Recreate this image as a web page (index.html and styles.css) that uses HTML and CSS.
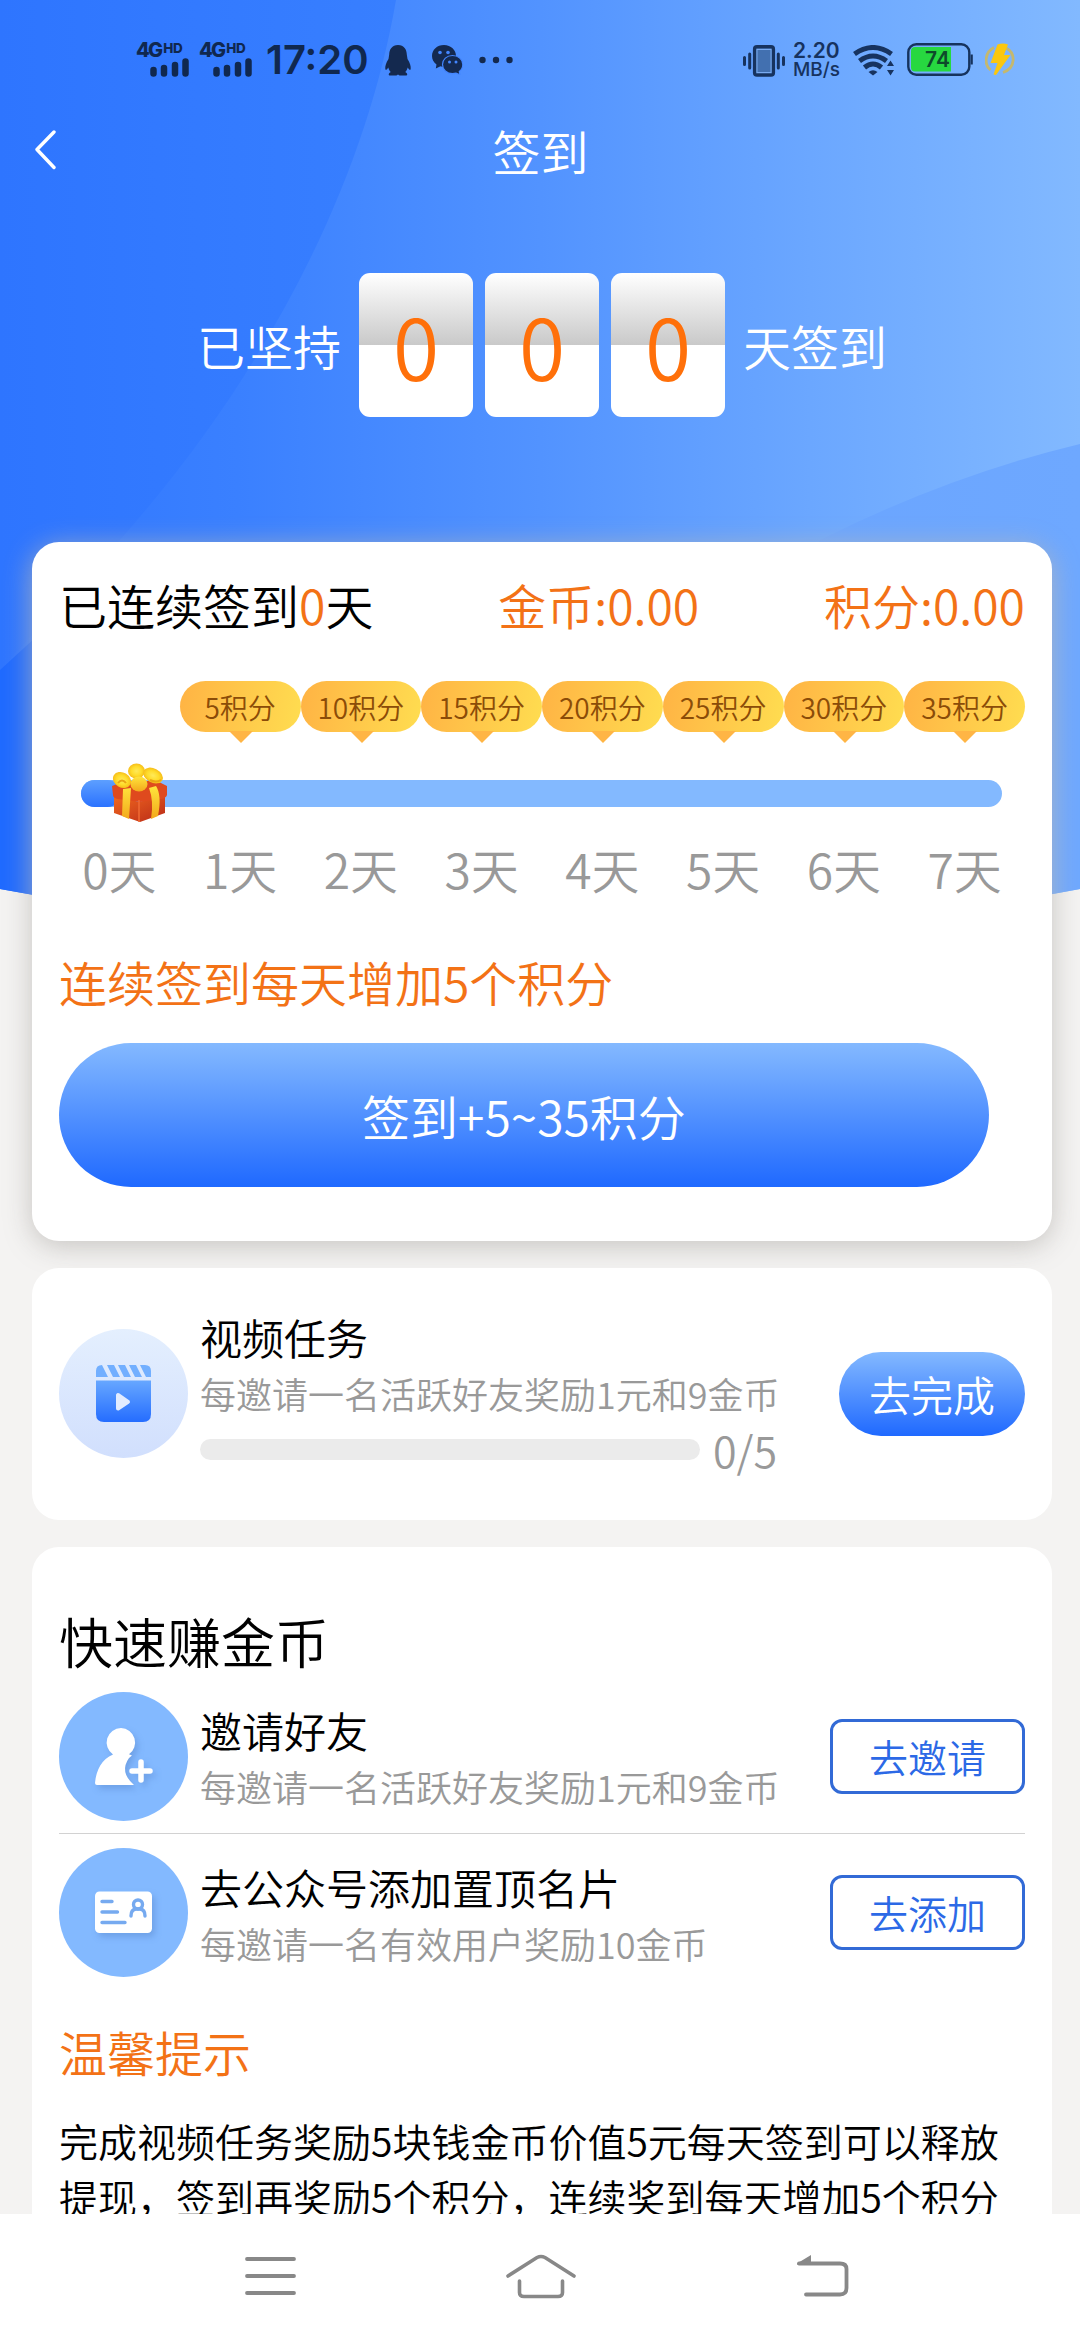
FILE: index.html
```html
<!DOCTYPE html>
<html lang="zh-CN">
<head>
<meta charset="utf-8">
<title>签到</title>
<link rel="stylesheet" href="styles.css">
</head>
<body>
<div class="phone">
  <svg class="hero" viewBox="0 0 1080 910" aria-hidden="true">
    <defs>
      <linearGradient id="sky" x1="0" x2="1"><stop offset="0" stop-color="#2f76ff"/><stop offset=".22" stop-color="#3a80ff"/><stop offset=".5" stop-color="#5293ff"/><stop offset=".75" stop-color="#6ba7ff"/><stop offset="1" stop-color="#82b9ff"/></linearGradient>
      <linearGradient id="left" x1="0" x2="1"><stop offset="0" stop-color="#2e75ff"/><stop offset="1" stop-color="#387fff"/></linearGradient>
      <linearGradient id="right" x1="0" x2="1"><stop offset="0" stop-color="#68a3ff"/><stop offset="1" stop-color="#6ea8ff"/></linearGradient>
      <clipPath id="arc"><path d="M0 0H1080V889Q810 940 540 940T0 889Z"/></clipPath>
    </defs>
    <g clip-path="url(#arc)">
      <rect width="1080" height="910" fill="url(#sky)"/>
      <path d="M0 0H396C365 180 270 370 120 540L0 670Z" fill="url(#left)"/>
      <path d="M1080 444Q950 475 820 540L600 910H1080Z" fill="url(#right)"/>
      <path d="M0 670L120 560V910H0Z" fill="#1f6aff"/>
    </g>
  </svg>

  <header class="status">
    <div class="sim"><span class="net">4G<sup>HD</sup></span><svg width="39" height="19" viewBox="0 0 39 19"><path d="M3.500 12v3.500M14 10v5.500M25 7v8.500M35.500 3.500v12" stroke="#10284f" stroke-width="6.500" stroke-linecap="round"/></svg></div>
    <div class="sim"><span class="net">4G<sup>HD</sup></span><svg width="39" height="19" viewBox="0 0 39 19"><path d="M3.500 12v3.500M14 10v5.500M25 7v8.500M35.500 3.500v12" stroke="#10284f" stroke-width="6.500" stroke-linecap="round"/></svg></div>
    <span class="clock">17:20</span>
    <svg class="qq" width="26" height="31" viewBox="0 0 26 31" fill="#14294f"><path d="M13 0C7 0 4.200 4.500 4.200 9.500L3.500 14C1 18 0 21 .3 24c.3 1.500 1.500 1 3-1.500.4 1.800 1.300 3.500 2.500 4.500C3.500 28 3 30.500 5 30.500H11.500L13 29.500l1.500 1H21c2-0 1.500-2.500-.8-3.500 1.200-1 2.100-2.700 2.500-4.500 1.500 2.500 2.700 3 3 1.500C26 21 25 18 22.500 14l-.7-4.500C21.800 4.500 19 0 13 0Z"/></svg>
    <svg class="wechat" width="31" height="30" viewBox="0 0 31 30"><path d="M12 0C5 0 0 4.800 0 11c0 3.500 1.700 6.500 4.500 8.500L3.800 23.500 8.500 21.200A13 13 0 0 0 12 21.800C19 21.800 24 17 24 11S19 0 12 0Z" fill="#14294f"/><circle cx="8" cy="7.500" r="1.800" fill="#4386ff"/><circle cx="16" cy="7.500" r="1.800" fill="#4386ff"/><path d="M20.500 10.500c-5.800 0-10 4-10 9s4.200 9.200 10 9.200c1.400 0 2.500-.2 3.600-.5L28 29.800l-.7-3.300c2.200-1.700 3.500-4.100 3.500-7 0-5-4.500-9-10.300-9Z" fill="#14294f" stroke="#4386ff" stroke-width="1.200"/><circle cx="17.500" cy="17" r="1.500" fill="#4386ff"/><circle cx="24" cy="17" r="1.500" fill="#4386ff"/></svg>
    <svg class="more" width="34" height="8" viewBox="0 0 34 8" fill="#14294f"><circle cx="3.500" cy="4" r="3.200"/><circle cx="17" cy="4" r="3.200"/><circle cx="30.500" cy="4" r="3.200"/></svg>

    <svg class="vibrate" width="42" height="32" viewBox="0 0 42 32"><rect x="11.500" y="1.700" width="19" height="28.500" rx="2.500" fill="#4270b0" stroke="#17335f" stroke-width="3.200"/><rect x="14" y="4.500" width="14" height="23" fill="none" stroke="#79aaf0" stroke-width="1"/><path d="M6.700 9v14M35.300 9v14M1.500 12.500v7M40.500 12.500v7" stroke="#17335f" stroke-width="3" stroke-linecap="round"/></svg>
    <div class="speed"><span>2.20</span><span>MB/s</span></div>
    <svg class="wifi" width="42" height="31" viewBox="0 0 42 31"><path d="M1.500 9Q20 -4 38.500 9M6.500 16Q20 6 33.500 16M11.500 22.500Q20 15.500 28.500 22.500" fill="none" stroke="#17335f" stroke-width="5"/><path d="M15.500 27Q20 23.500 24.500 27L20 30.500Z" fill="#17335f"/><path d="M34 21L37.500 15.500 41 21ZM34 25L37.500 30.500 41 25Z" fill="#17335f"/></svg>
    <svg class="battery" width="66" height="33" viewBox="0 0 66 33"><rect x="1.300" y="1.300" width="61" height="30.400" rx="8" fill="none" stroke="#16335d" stroke-width="2.400"/><path d="M8 4H44V28.500H8Q4 28.500 4 24.500V8Q4 4 8 4Z" fill="#27d840"/><path d="M64.700 11.500v10" stroke="#16335d" stroke-width="2.200"/><text x="30.500" y="24.300" text-anchor="middle" class="charge">74</text></svg>
    <svg class="bolt" width="30" height="33" viewBox="0 0 30 33"><g fill="none" stroke="#c4b86f" stroke-width="2.800"><path d="M9 4.500C0 9 -1.500 21 5.500 27"/><path d="M21 5C31 10 31 25 18 29.500"/></g><path d="M12.500 1.500Q18-.5 23 1.500L19 12H25.500L11 32 8.500 31.500 12.500 20H5.500Z" fill="#fbc70f"/></svg>
  </header>

  <nav class="titlebar">
    <svg width="22" height="40" viewBox="0 0 22 40"><path d="M19 2L2 19.500 19 37.500" fill="none" stroke="#fff" stroke-width="3.400" stroke-linecap="round" stroke-linejoin="round"/></svg>
    <h1>签到</h1>
  </nav>

  <section class="counter">
    <span class="label">已坚持</span>
    <div class="flips"><b>0</b><b>0</b><b>0</b></div>
    <span class="label">天签到</span>
  </section>

  <main>
    <section class="card checkin">
      <div class="totals"><span>已连续签到<em>0</em>天</span><em>金币:0.00</em><em>积分:0.00</em></div>
      <div class="badges"><i></i><span>5积分</span><span>10积分</span><span>15积分</span><span>20积分</span><span>25积分</span><span>30积分</span><span>35积分</span></div>
      <div class="track">
        <div class="fill"></div>
        <svg class="gift" width="58" height="60" viewBox="0 0 58 60">
          <defs>
            <linearGradient id="box" x1="0" y1="0" x2="1" y2="1"><stop offset="0" stop-color="#f2691f"/><stop offset="1" stop-color="#b92a18"/></linearGradient>
            <linearGradient id="gold" x1="0" y1="0" x2="0" y2="1"><stop offset="0" stop-color="#ffe43c"/><stop offset="1" stop-color="#f3a91c"/></linearGradient>
            <radialGradient id="bow"><stop offset="0" stop-color="#ffe95a"/><stop offset=".6" stop-color="#ffdc2a"/><stop offset="1" stop-color="#f6bd1a"/></radialGradient>
          </defs>
          <path d="M3 32L28 39 54 32V50L29 59 3 50Z" fill="url(#box)"/>
          <path d="M1 23L14 18H46L56 23V32Q55 35 50 36L29 39 7 36Q2 35 2 32Z" fill="#df4a1e"/>
          <path d="M28 37V59" stroke="#f06b35" stroke-width="1.500"/>
          <path d="M12 26L20 25 18 56 11 53ZM38 25L45 23Q51 32 47 53L40 56Q43 38 38 25Z" fill="url(#gold)"/>
          <ellipse cx="25.500" cy="8" rx="8.500" ry="7.500" fill="url(#bow)"/>
          <ellipse cx="11" cy="17" rx="9.500" ry="7.500" transform="rotate(30 11 17)" fill="url(#bow)"/>
          <ellipse cx="42" cy="12.500" rx="10.500" ry="7" transform="rotate(28 42 12.500)" fill="url(#bow)"/>
          <path d="M7 20Q11 15 15 20M39 17Q45 20 50 17" fill="none" stroke="#e9a414" stroke-width="2"/>
          <ellipse cx="28" cy="21" rx="8.500" ry="7.500" fill="url(#gold)"/>
        </svg>
      </div>
      <div class="days"><span>0天</span><span>1天</span><span>2天</span><span>3天</span><span>4天</span><span>5天</span><span>6天</span><span>7天</span></div>
      <p class="rule">连续签到每天增加5个积分</p>
      <button class="sign">签到+5~35积分</button>
    </section>

    <section class="card task">
      <svg class="icon" viewBox="0 0 129 129">
        <defs>
          <linearGradient id="pale" x1="0" y1="0" x2="0" y2="1"><stop offset="0" stop-color="#e4effe"/><stop offset="1" stop-color="#d1dffd"/></linearGradient>
          <linearGradient id="film" x1="0" y1="0" x2="0" y2="1"><stop offset="0" stop-color="#67a7ff"/><stop offset="1" stop-color="#256dff"/></linearGradient>
        </defs>
        <circle cx="64.500" cy="64.500" r="64.500" fill="url(#pale)"/>
        <path d="M37 51.500H92V85Q92 93 84 93H45Q37 93 37 85Z" fill="url(#film)"/>
        <path d="M37 48V42Q37 36 43 36L49 48ZM48 36H55L61 48H54ZM59 36H66L72 48H65ZM70 36H77L83 48H76ZM81 36H86Q92 36 92 42V48H87Z" fill="#72afff"/>
        <path d="M59 66V79.500L69 72.800Z" fill="#e2ecff" stroke="#e2ecff" stroke-width="4" stroke-linejoin="round"/>
      </svg>
      <div class="info">
        <h3>视频任务</h3>
        <p>每邀请一名活跃好友奖励1元和9金币</p>
        <div class="progress"><div class="bar"></div><span>0/5</span></div>
      </div>
      <button class="go">去完成</button>
    </section>

    <section class="card earn">
      <h2>快速赚金币</h2>
      <div class="row">
        <svg class="icon" viewBox="0 0 129 129">
          <circle cx="64.500" cy="64.500" r="64.500" fill="#83b9ff"/>
          <g class="glyph" fill="#fff"><path d="M62 36A14.500 14.500 0 0 0 54 62.500C43 67 37 78 36 91Q36 93 38 93H75Q60 80 70 66L73 63.500 70 62.300A14.500 14.500 0 0 0 62 36Z"/><path d="M82 70V88M73 79H91" stroke="#fff" stroke-width="5.500" stroke-linecap="round"/></g>
        </svg>
        <div class="info"><h3>邀请好友</h3><p>每邀请一名活跃好友奖励1元和9金币</p></div>
        <button class="outline">去邀请</button>
      </div>
      <div class="row">
        <svg class="icon" viewBox="0 0 129 129">
          <circle cx="64.500" cy="64.500" r="64.500" fill="#83b9ff"/>
          <rect class="glyph" x="36" y="43.500" width="57" height="41.500" rx="4.500" fill="#fff"/>
          <g fill="none" stroke="#76aaf0" stroke-width="3.400" stroke-linecap="round"><path d="M43 53.500H53M43 64H58.500M43 74.500H66"/><circle cx="79" cy="56.500" r="4.500"/><path d="M72 68Q72 61.500 77 61H81Q86 61.500 86 68"/></g>
        </svg>
        <div class="info"><h3>去公众号添加置顶名片</h3><p>每邀请一名有效用户奖励10金币</p></div>
        <button class="outline">去添加</button>
      </div>
      <h4>温馨提示</h4>
      <p class="tips">完成视频任务奖励5块钱金币价值5元每天签到可以释放<br>提现，签到再奖励5个积分，连续奖到每天增加5个积分</p>
    </section>
  </main>

  <footer>
    <svg width="52" height="44" viewBox="0 0 52 44"><path d="M3 5H50M3 22H50M3 39H50" stroke="#888" stroke-width="3.800" stroke-linecap="round"/></svg>
    <svg width="72" height="46" viewBox="0 0 72 46"><path d="M3 22L32 3.500Q36 1.500 40 3.500L69 22M14.500 27V38.500Q14.500 42.500 19 42.500H53Q57.500 42.500 57.500 38.500V27" fill="none" stroke="#888" stroke-width="3.600" stroke-linecap="round"/></svg>
    <svg width="54" height="46" viewBox="0 0 54 46"><path d="M1 9.500L15 1V10.500H1Z" fill="#888"/><path d="M3 9.500H44Q50.500 9.500 50.500 15V34Q50.500 40.500 44 40.500H10" fill="none" stroke="#888" stroke-width="3.800" stroke-linecap="round"/></svg>
  </footer>
</div>
</body>
</html>
```

FILE: styles.css
```css
* { box-sizing: border-box; margin: 0; padding: 0; }
body { width: 1080px; background: #f4f3f2; font-family: "Noto Sans CJK SC", sans-serif; font-weight: 350; color: #000; }
em, i { font-style: normal; }
h1, h2, h3, h4 { font-weight: 350; }
button { border: 0; font-family: inherit; font-weight: 350; color: #fff; }
svg { display: block; flex: none; }

.phone { position: relative; height: 2340px; overflow: hidden; display: flex; flex-direction: column; isolation: isolate; }
.hero { position: absolute; top: 0; left: 0; width: 1080px; height: 910px; z-index: -1; }

.status { height: 100px; padding: 42px 65px 0 136px; display: flex; align-items: flex-start; font-family: Inter, sans-serif; color: #10284f; }
.sim { width: 53px; margin-right: 10px; display: flex; flex-direction: column; align-items: flex-end; }
.net { width: 53px; height: 16px; font-size: 20px; line-height: 16px; font-weight: 800; letter-spacing: -1.8px; white-space: nowrap; display: flex; }
.net sup { font-size: 13.500px; line-height: 2px; padding-top: 5px; letter-spacing: -.3px; margin-left: 2px; vertical-align: baseline; }
.clock { margin-left: 4px; width: 101px; font-size: 40px; line-height: 36px; font-weight: 600; white-space: nowrap; }
.qq { margin: 3px 0 0 18px; }
.wechat { margin: 3px 0 0 21px; }
.more { margin: 14px 0 0 16px; }
.vibrate { margin: 3px 0 0 auto; }
.speed { width: 50px; margin-left: 8px; display: flex; flex-direction: column; font-weight: 600; white-space: nowrap; color: #17335f; }
.speed span { font-size: 21px; line-height: 18px; }
.speed span + span { font-size: 19px; line-height: 20px; font-weight: 500; }
.wifi { margin: 3px 0 0 10px; }
.battery { margin: 1px 0 0 12px; }
.charge { font: 600 21px Inter, sans-serif; fill: #0e4a2b; }
.bolt { margin: 1px 0 0 12px; }

.titlebar { height: 100px; padding: 0 34px 0 35px; display: grid; grid-template-columns: 60px 1fr 60px; align-items: center; color: #fff; }
.titlebar h1 { font-size: 48px; line-height: 72px; text-align: center; }

.counter { margin-top: 73px; height: 144px; padding-left: 4px; display: flex; justify-content: center; align-items: center; gap: 18px; color: #fff; }
.label { font-size: 48px; line-height: 72px; }
.flips { display: flex; gap: 12px; }
.flips b { width: 114px; height: 144px; border-radius: 11px; background: linear-gradient(#fff, #c9c9c9 50%, #fff 50%); color: #ff700a; font-size: 84px; line-height: 144px; font-weight: 350; text-align: center; }

main { height: 1672px; margin-top: 125px; padding: 0 28px 0 32px; flex: none; display: flex; flex-direction: column; gap: 27px; }
.card { background: #fff; border-radius: 27px; padding: 0 27px; flex: none; }
.checkin { height: 699px; box-shadow: 0 5px 28px rgba(186, 184, 180, .8); }
.totals { padding-top: 26px; display: flex; justify-content: space-between; font-size: 48px; line-height: 72px; }
.totals em, .rule, h4 { color: #f37216; }
.badges, .days { display: grid; grid-template-columns: repeat(8, 1fr); }
.badges { margin-top: 41px; }
.badges span { position: relative; height: 51px; border-radius: 26px; background: linear-gradient(100deg, #ffb344, #ffdd50); color: #8b4c08; font-size: 28px; line-height: 52px; text-align: center; }
.badges span::after { content: ""; position: absolute; top: 50px; left: 49px; border: 12px solid transparent; border-bottom: 0; border-top-color: #ffb545; }
.track { position: relative; margin: 48px 23px 0 22px; height: 27px; border-radius: 14px; background: #83b9ff; }
.fill { width: 40px; height: 27px; border-radius: 20px; background: linear-gradient(#5d9fff, #2b72ff); }
.gift { position: absolute; left: 30px; top: -17px; }
.days { margin-top: 25px; font-size: 48px; line-height: 72px; color: #999; text-align: center; }
.rule { margin-top: 41px; font-size: 48px; line-height: 72px; }
.sign { display: block; margin-top: 26px; width: 930px; height: 144px; border-radius: 72px; background: linear-gradient(#84b9ff, #1f69ff); font-size: 48px; line-height: 144px; }

.icon { width: 129px; height: 129px; }
.glyph { filter: drop-shadow(3px 4px 3px rgba(50, 90, 160, .25)); }
.info { margin-left: 12px; flex: 1; white-space: nowrap; }
.info h3 { font-size: 42px; line-height: 60px; }
.info p { font-size: 36px; line-height: 52px; color: #999; }
.task { height: 252px; display: flex; align-items: center; }
.task .icon { margin-bottom: 2px; }
.task .info { padding-bottom: 2px; }
.progress { display: flex; align-items: center; height: 60px; gap: 13px; }
.bar { width: 500px; height: 21px; border-radius: 11px; background: #ebebeb; }
.progress span { font-size: 43px; line-height: 60px; color: #999; }
.go { width: 186px; height: 84px; border-radius: 42px; background: linear-gradient(#84b9ff, #1f69ff); font-size: 42px; line-height: 84px; }

.earn { height: 900px; padding-top: 54px; }
.earn h2 { font-size: 54px; line-height: 80px; margin-bottom: -4px; }
.row { height: 156px; padding-top: 2px; display: flex; align-items: center; }
.row + .row { border-top: 1px solid #d2d2d2; }
.outline { width: 195px; height: 75px; border: 3px solid #326ad6; border-radius: 12px; background: #fff; color: #2c69e6; font-size: 39px; line-height: 67px; }
h4 { margin-top: 26px; font-size: 48px; line-height: 72px; }
.tips { margin-top: 25px; font-size: 39px; line-height: 56px; white-space: nowrap; }

footer { position: absolute; left: 0; bottom: 0; width: 1080px; height: 126px; background: #fff; display: flex; justify-content: space-between; padding: 40px 230px 0 244px; }
footer svg:nth-child(2) { position: relative; left: -5px; }
```
